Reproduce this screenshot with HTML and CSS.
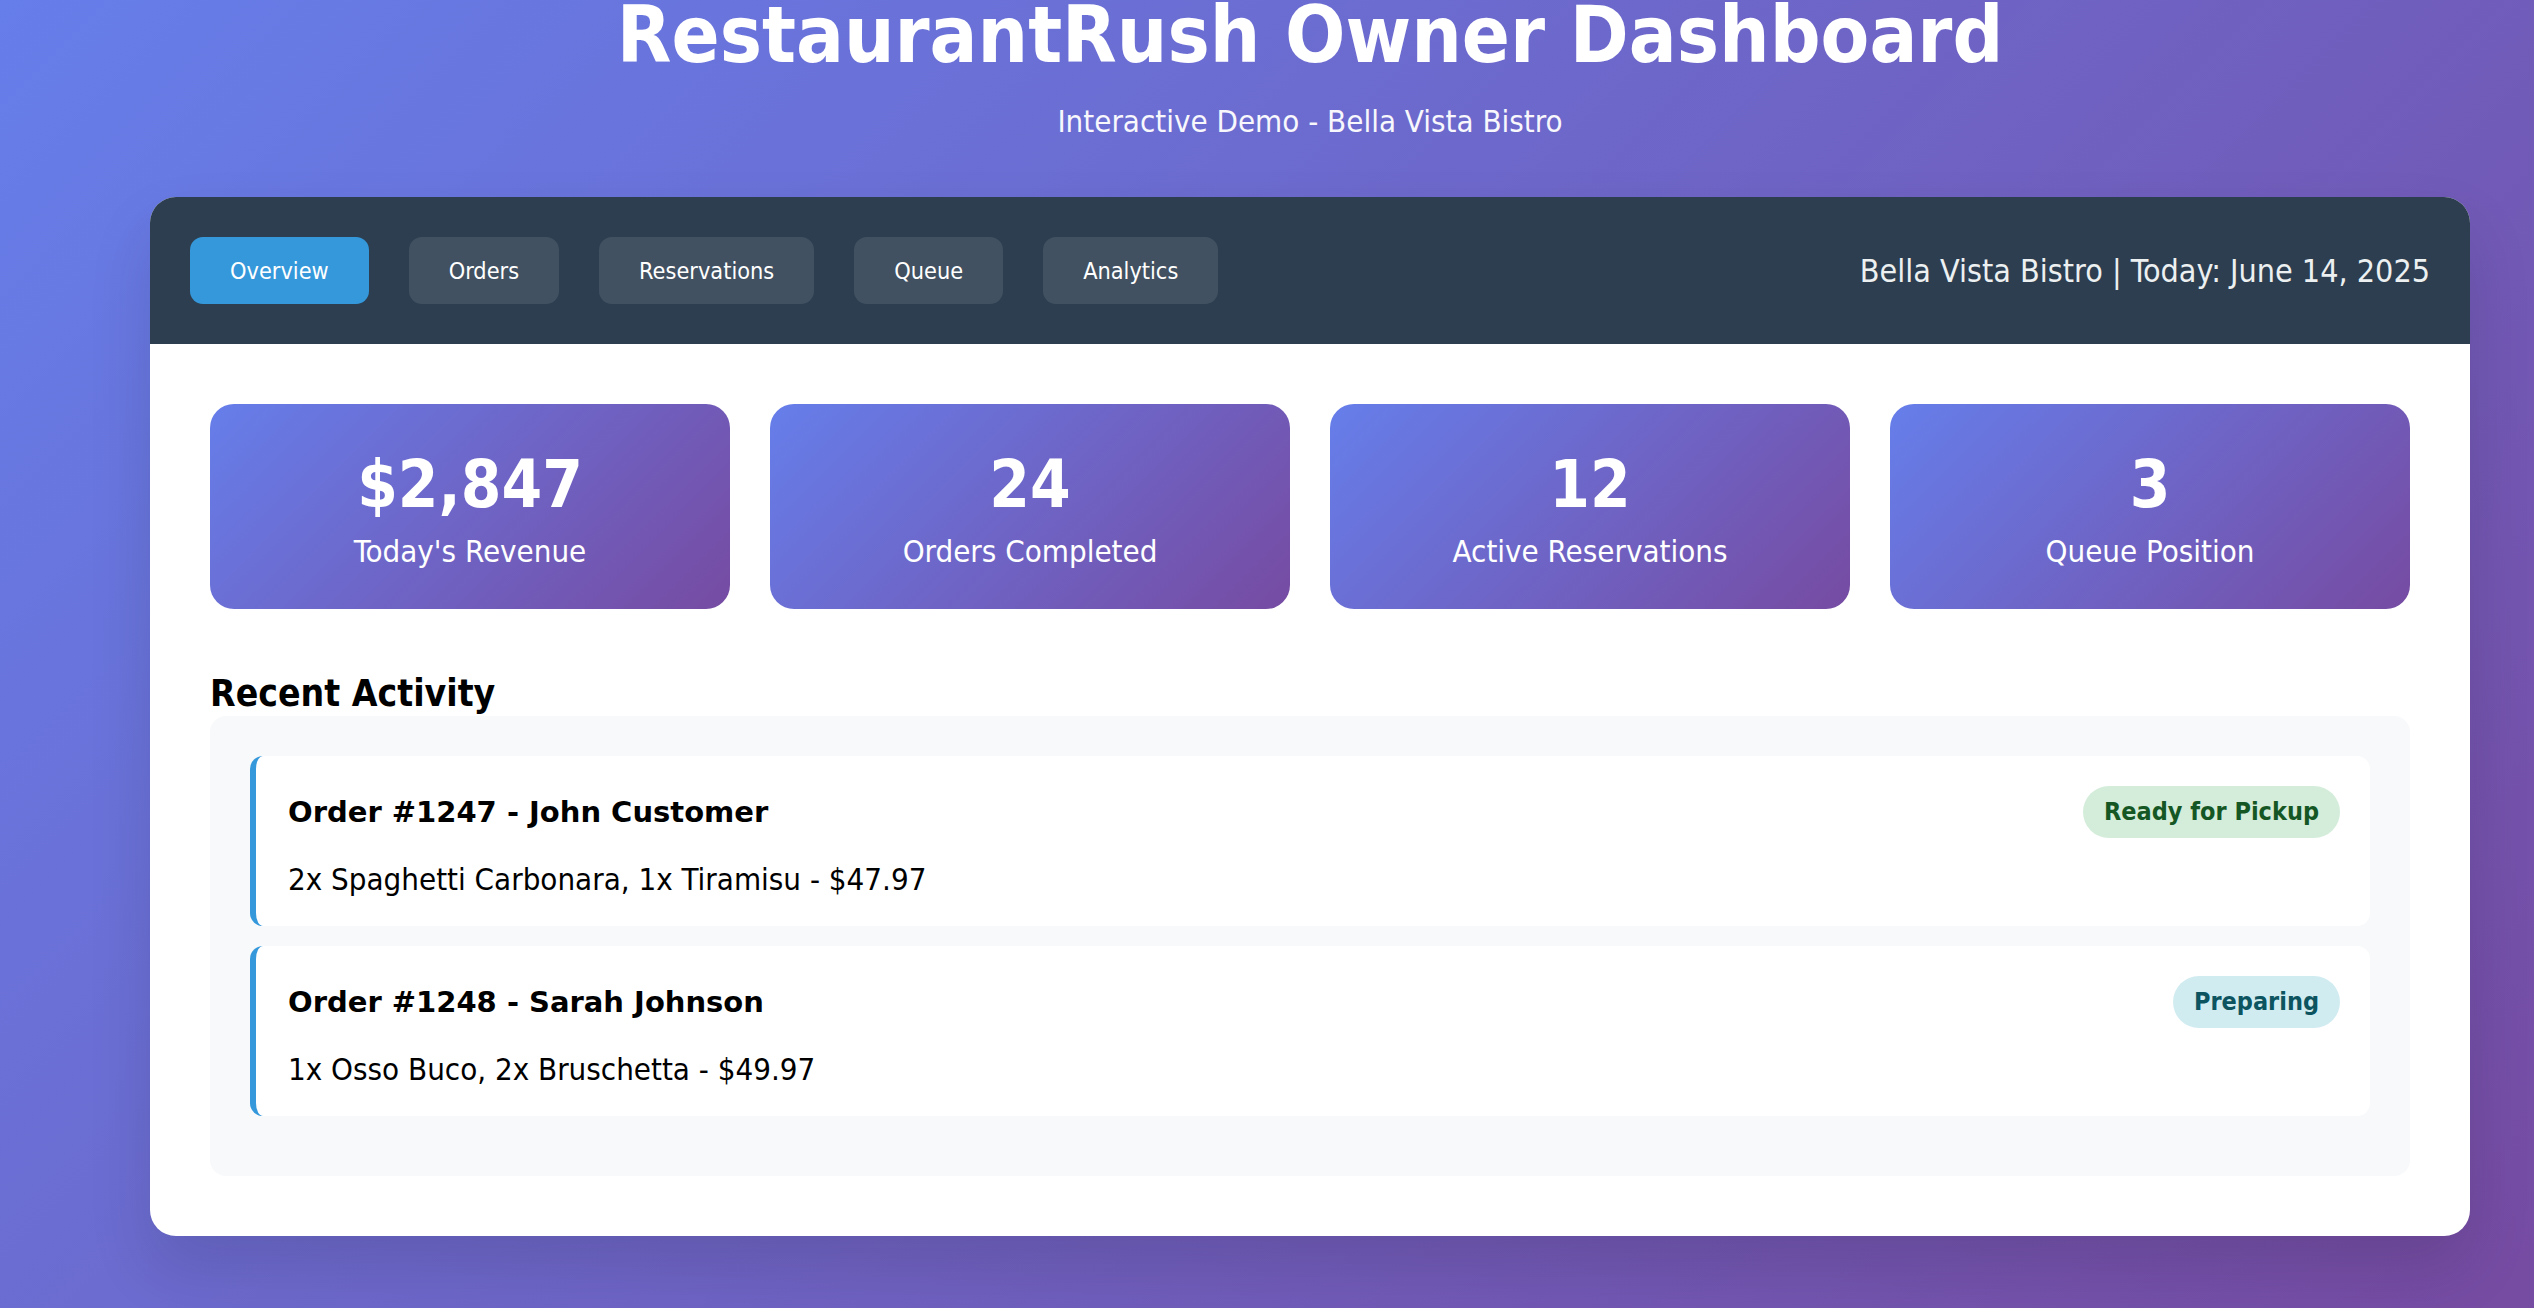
FILE: index.html
```html
<!DOCTYPE html>
<html lang="en">
<head>
<meta charset="utf-8">
<title>RestaurantRush Owner Dashboard</title>
<link rel="stylesheet" href="styles.css">
</head>
<body>
<div class="page">
  <header class="hero">
    <h1 class="hero-title">RestaurantRush Owner Dashboard</h1>
    <p class="hero-sub">Interactive Demo - Bella Vista Bistro</p>
  </header>

  <main class="dashboard">
    <div class="topbar">
      <nav class="tabs">
        <button class="tab tab-active">Overview</button>
        <button class="tab">Orders</button>
        <button class="tab">Reservations</button>
        <button class="tab">Queue</button>
        <button class="tab">Analytics</button>
      </nav>
      <div class="topbar-info">Bella Vista Bistro | Today: June 14, 2025</div>
    </div>

    <section class="content">
      <div class="stats">
        <div class="stat-card">
          <div class="stat-value">$2,847</div>
          <div class="stat-label">Today's Revenue</div>
        </div>
        <div class="stat-card">
          <div class="stat-value">24</div>
          <div class="stat-label">Orders Completed</div>
        </div>
        <div class="stat-card">
          <div class="stat-value">12</div>
          <div class="stat-label">Active Reservations</div>
        </div>
        <div class="stat-card">
          <div class="stat-value">3</div>
          <div class="stat-label">Queue Position</div>
        </div>
      </div>

      <h3 class="section-title">Recent Activity</h3>
      <div class="activity">
        <div class="activity-item">
          <div class="activity-head">
            <span class="activity-title">Order #1247 - John Customer</span>
            <span class="badge badge-ready">Ready for Pickup</span>
          </div>
          <div class="activity-desc">2x Spaghetti Carbonara, 1x Tiramisu - $47.97</div>
        </div>
        <div class="activity-item">
          <div class="activity-head">
            <span class="activity-title">Order #1248 - Sarah Johnson</span>
            <span class="badge badge-preparing">Preparing</span>
          </div>
          <div class="activity-desc">1x Osso Buco, 2x Bruschetta - $49.97</div>
        </div>
      </div>
    </section>
  </main>
</div>
</body>
</html>
```

FILE: styles.css
```css
html {
  min-height: 100%;
  background: linear-gradient(135deg, #667eea 0%, #764ba2 100%);
}

body {
  margin: 0;
  min-height: 100vh;
  font-family: "DejaVu Sans Condensed", "DejaVu Sans", sans-serif;
  color: #000;
}

.page {
  padding: 0 64px 0 150px;
}

.hero {
  text-align: center;
  color: #fff;
}

.hero-title {
  margin: 0;
  font-size: 79px;
  line-height: 70px;
  font-weight: bold;
}

.hero-sub {
  margin: 33px 0 0;
  font-size: 31px;
  line-height: 36px;
  opacity: 0.95;
}

.dashboard {
  margin-top: 58px;
  background: #fff;
  border-radius: 26px;
  overflow: hidden;
  box-shadow: 0 32px 64px rgba(0, 0, 0, 0.12);
}

.topbar {
  background: #2c3e50;
  padding: 40px;
  display: flex;
  align-items: center;
  justify-content: space-between;
}

.tabs {
  display: flex;
  gap: 40px;
}

.tab {
  font-family: inherit;
  font-size: 23.3px;
  line-height: 27px;
  padding: 20px 40px;
  border: 0;
  border-radius: 13px;
  color: #fff;
  background: rgba(255, 255, 255, 0.1);
}

.tab-active {
  background: #3498db;
}

.topbar-info {
  color: #ecf0f1;
  font-size: 32px;
}

.content {
  padding: 60px;
}

.stats {
  display: grid;
  grid-template-columns: repeat(4, 1fr);
  gap: 40px;
}

.stat-card {
  background: linear-gradient(135deg, #667eea 0%, #764ba2 100%);
  color: #fff;
  border-radius: 24px;
  padding: 43px 40px 40px;
  text-align: center;
}

.stat-value {
  font-size: 65px;
  font-weight: bold;
  margin-bottom: 12px;
}

.stat-label {
  font-size: 31px;
  line-height: 35px;
}

.section-title {
  margin: 62px 0 0;
  font-size: 37px;
  line-height: 45px;
  font-weight: bold;
}

.activity {
  background: #f8f9fa;
  border-radius: 16px;
  padding: 40px 40px 40px;
}

.activity-item {
  background: #fff;
  border-left: 6px solid #3498db;
  border-radius: 13px;
  padding: 30px 30px 30px 32px;
  margin-bottom: 20px;
}

.activity-head {
  display: flex;
  align-items: center;
  justify-content: space-between;
}

.activity-title {
  font-family: "DejaVu Sans", sans-serif;
  font-size: 29px;
  font-weight: bold;
}

.activity-desc {
  margin-top: 24px;
  font-size: 31px;
  line-height: 34px;
}

.badge {
  font-size: 25px;
  line-height: 29px;
  font-weight: bold;
  padding: 11px 21px 12px;
  border-radius: 26px;
}

.badge-ready {
  background: #d4edda;
  color: #155724;
}

.badge-preparing {
  background: #d1ecf1;
  color: #0c5460;
}
```
